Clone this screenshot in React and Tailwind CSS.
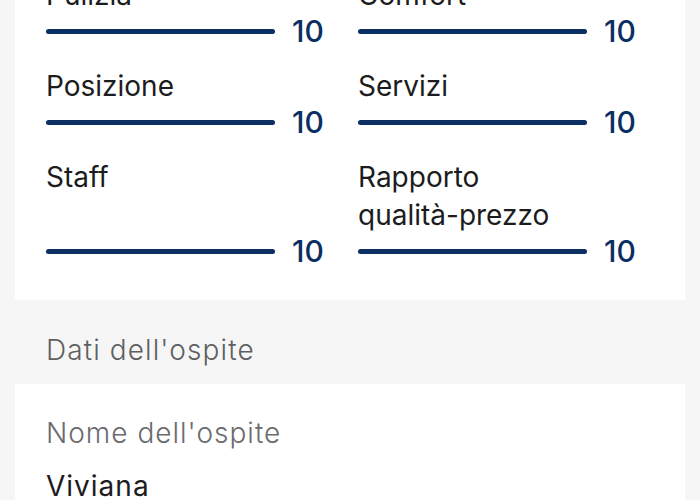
const scores = [
  [{ label: 'Pulizia', value: 10 }, { label: 'Comfort', value: 10 }],
  [{ label: 'Posizione', value: 10 }, { label: 'Servizi', value: 10 }],
  [{ label: 'Staff', value: 10 }, { label: ['Rapporto', 'qualità-prezzo'], value: 10 }],
];

function ScoreItem({ label, value }) {
  const lines = Array.isArray(label) ? label : [label];
  return (
    <div className="flex flex-col justify-between">
      <div className="text-[28px] leading-[38px] text-[#1c1c1e]">
        {lines.map((l) => (
          <div key={l}>{l}</div>
        ))}
      </div>
      <div className="flex items-center h-[30px] mt-[2px]">
        <div className="flex-1 h-[5px] rounded-full bg-[#0b2f63]" />
        <span className="w-[61px] pl-[17px] text-[30px] leading-none font-medium text-[#0b2f63]">
          {value}
        </span>
      </div>
    </div>
  );
}

export default function App() {
  return (
    <div
      className="h-[500px] bg-[#f6f6f6] overflow-hidden"
      style={{ fontFamily: 'Inter, "Noto Sans", sans-serif' }}
    >
      <div className="mx-[15px] -mt-[48px] bg-white px-[31px] pt-6 pb-[34px]">
        <div className="grid grid-cols-[290px_290px] gap-x-[22px] gap-y-[21px]">
          {scores.map((row) =>
            row.map((s) => <ScoreItem key={String(s.label)} label={s.label} value={s.value} />)
          )}
        </div>
      </div>

      <div className="px-[46px] pt-8 pb-[15px] text-[28px] leading-[37px] tracking-[1.1px] text-[#5f5f63] font-light">
        Dati dell'ospite
      </div>

      <div className="mx-[15px] bg-white px-[31px] pt-[31px] pb-6">
        <div className="text-[28px] leading-[37px] tracking-[1px] text-[#6b6b70] font-light">
          Nome dell'ospite
        </div>
        <div className="mt-4 text-[28px] leading-[37px] tracking-[1px] text-[#1c1c1e]">Viviana</div>
      </div>
    </div>
  );
}
